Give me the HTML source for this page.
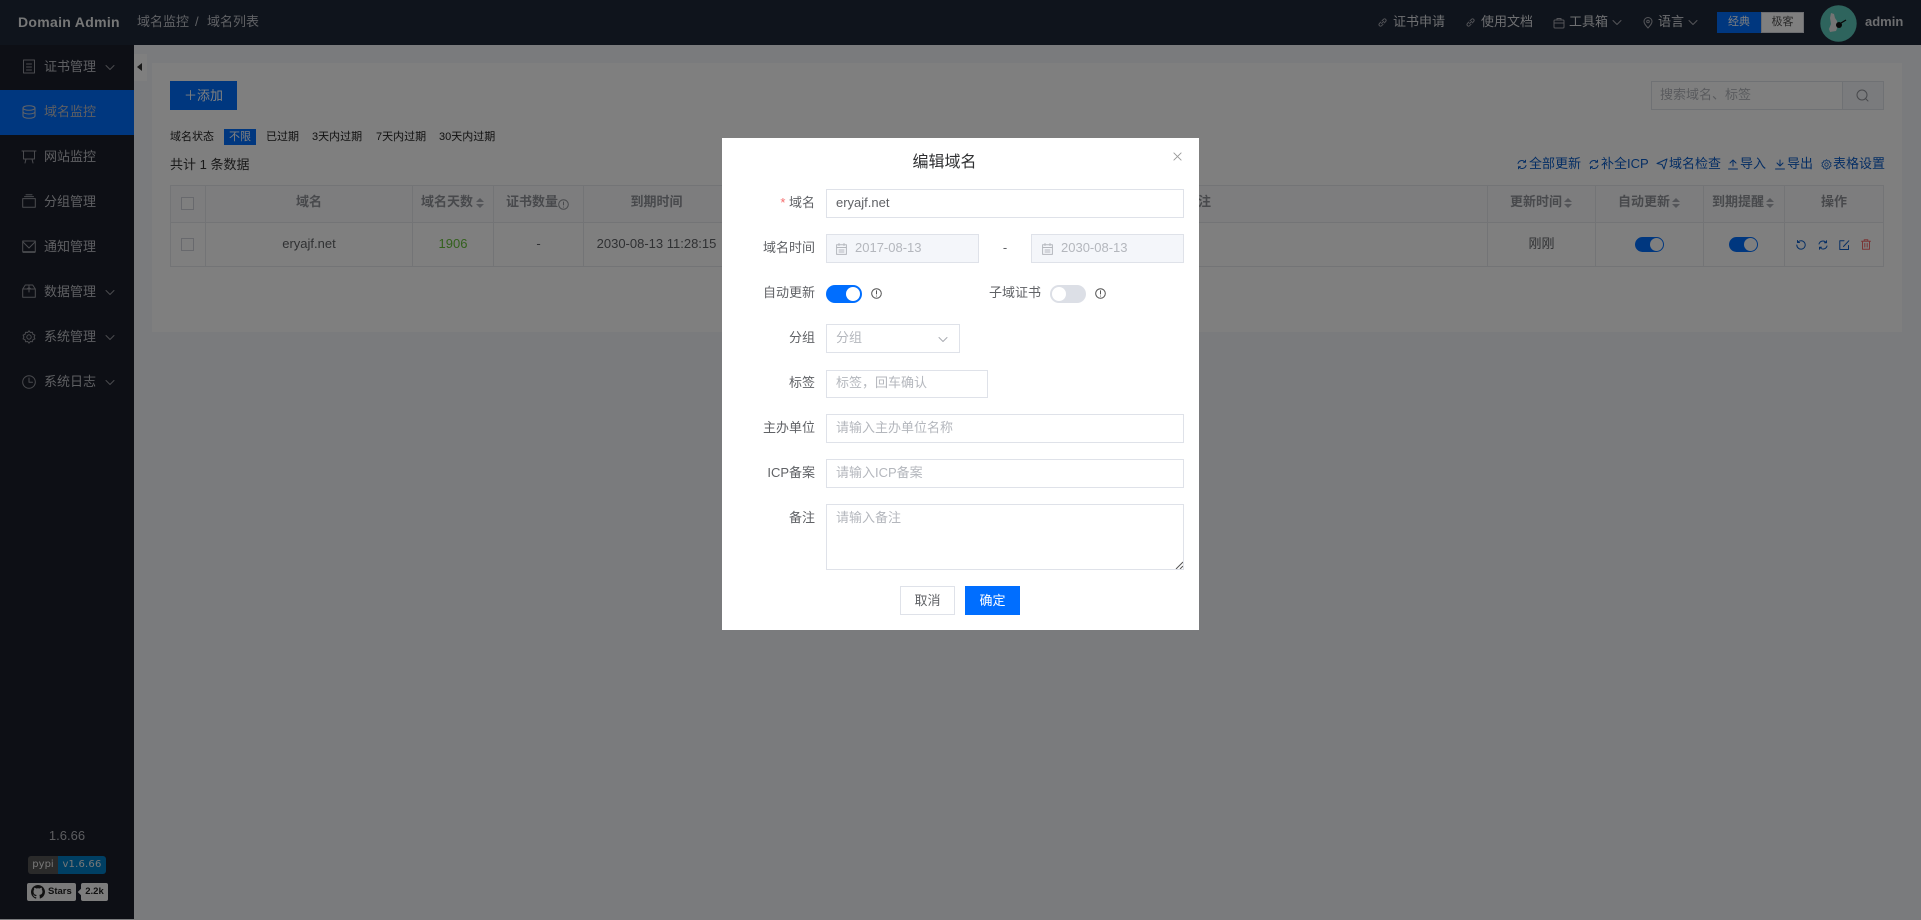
<!DOCTYPE html>
<html lang="zh"><head><meta charset="utf-8"><title>Domain Admin</title>
<style>
*{box-sizing:border-box}
html,body{margin:0;padding:0;width:1921px;height:920px;overflow:hidden;background:#f4f6fa;font-family:"Liberation Sans","Noto Sans CJK SC",sans-serif;font-size:13px;color:#606266}
.a{position:absolute}
.t{position:absolute;white-space:nowrap;line-height:20px;height:20px}
.c{text-align:center}
svg.i{position:absolute;fill:none;stroke:currentColor;stroke-width:1;stroke-linecap:round;stroke-linejoin:round}
.side{color:#bdbfc5}
.link{color:#0a5cc8}
.th{font-weight:bold;color:#909399;text-align:center}
.line{position:absolute;background:#e6e8ec}
.inp{position:absolute;border:1px solid #dfe2e9;background:#fff;height:29px}
.lab{position:absolute;white-space:nowrap;line-height:20px;height:20px;color:#606266;text-align:right;width:100px;left:715px}
.ph{color:#b4b7bd}
</style></head><body>

<!-- header -->
<div class="a" style="left:0;top:0;width:1921px;height:45px;background:#1f2838"></div>
<div class="t" style="left:18px;top:12px;color:#fff;font-weight:bold;font-size:14px;letter-spacing:.3px;opacity:.92">Domain Admin</div>
<div class="t" style="left:137px;top:12px;color:#bfc2c9">域名监控</div>
<div class="t" style="left:195px;top:12px;color:#bfc2c9">/</div>
<div class="t" style="left:207px;top:12px;color:#bfc2c9">域名列表</div>

<div style="color:#dcdee2">
<svg class="i" style="left:1377px;top:17px;color:#a8abb2" width="11" height="11" viewBox="0 0 12 12"><path d="M5 7.2 7.4 4.8M4.2 5.5 2.6 7.1a1.7 1.7 0 0 0 2.4 2.4L6.6 8M5.5 4.1 7.1 2.5a1.7 1.7 0 0 1 2.4 2.4L7.9 6.5"/></svg>
<div class="t" style="left:1393px;top:12px">证书申请</div>
<svg class="i" style="left:1465px;top:17px;color:#a8abb2" width="11" height="11" viewBox="0 0 12 12"><path d="M5 7.2 7.4 4.8M4.2 5.5 2.6 7.1a1.7 1.7 0 0 0 2.4 2.4L6.6 8M5.5 4.1 7.1 2.5a1.7 1.7 0 0 1 2.4 2.4L7.9 6.5"/></svg>
<div class="t" style="left:1481px;top:12px">使用文档</div>
<svg class="i" style="left:1553px;top:17px;color:#a8abb2" width="12" height="12" viewBox="0 0 12 12"><rect x="1" y="3" width="10" height="8" rx="1"/><path d="M4 3V1.5h4V3M1 6h10"/></svg>
<div class="t" style="left:1569px;top:12px">工具箱</div>
<svg class="i" style="left:1612px;top:19px;color:#a8abb2" width="10" height="7" viewBox="0 0 10 7"><path d="M1 1.5 5 5.5 9 1.5"/></svg>
<svg class="i" style="left:1643px;top:17px;color:#a8abb2" width="10" height="12" viewBox="0 0 10 12"><path d="M5 11C2.5 8.2 1 6.5 1 4.5a4 4 0 0 1 8 0C9 6.5 7.5 8.2 5 11Z"/><circle cx="5" cy="4.5" r="1.3"/></svg>
<div class="t" style="left:1658px;top:12px">语言</div>
<svg class="i" style="left:1688px;top:19px;color:#a8abb2" width="10" height="7" viewBox="0 0 10 7"><path d="M1 1.5 5 5.5 9 1.5"/></svg>
</div>
<div class="a c" style="left:1717px;top:12px;width:44px;height:21px;background:#006eff;color:#fff;line-height:21px;font-size:11px">经典</div>
<div class="a c" style="left:1761px;top:12px;width:43px;height:21px;background:#fff;border:1px solid #d8dae0;color:#555;line-height:19px;font-size:11px">极客</div>
<svg class="a" style="left:1820px;top:5px" width="37" height="37" viewBox="0 0 37 37"><circle cx="18.5" cy="18.5" r="18.2" fill="#5cc8ba"/><path d="M11 8l3 1 1 4 2 3 1 5-2 5-6 1-1-3 2-5-1-6Z" fill="#e8e8e8"/><circle cx="19" cy="20" r="3" fill="#111"/><path d="M21 18l5-3" stroke="#111" stroke-width="1.3"/></svg>
<div class="t" style="left:1865px;top:12px;font-weight:bold;color:#d8dade;font-size:13px">admin</div>

<!-- sidebar -->
<div class="a" style="left:0;top:45px;width:134px;height:874px;background:#1b1e2a"></div>
<div class="a" style="left:0;top:90px;width:134px;height:45px;background:#006eff"></div>
<div class="side">
<svg class="i" style="left:22px;top:59px;color:#94979e" width="14" height="15" viewBox="0 0 14 15"><rect x="1.5" y="1" width="11" height="13"/><path d="M4.5 5h5M4.5 8h5M4.5 11h5"/></svg>
<div class="t" style="left:44px;top:57px">证书管理</div>
<svg class="i" style="left:105px;top:64px;color:#94979e" width="10" height="7" viewBox="0 0 10 7"><path d="M1 1.5 5 5.5 9 1.5"/></svg>
<svg class="i" style="left:22px;top:105px;color:#c8cad0" width="14" height="14" viewBox="0 0 14 14"><ellipse cx="7" cy="3" rx="6" ry="2.3"/><path d="M1 3v8c0 1.3 2.7 2.3 6 2.3s6-1 6-2.3V3M1 6.7c0 1.3 2.7 2.3 6 2.3s6-1 6-2.3"/></svg>
<div class="t" style="left:44px;top:102px">域名监控</div>
<svg class="i" style="left:21px;top:149px;color:#94979e" width="16" height="15" viewBox="0 0 16 15"><path d="M1 2h14M2.5 2v8h11V2M5 10l-1 4M11 10l1 4"/></svg>
<div class="t" style="left:44px;top:147px">网站监控</div>
<svg class="i" style="left:22px;top:194px;color:#94979e" width="14" height="14" viewBox="0 0 14 14"><rect x=".7" y="4.6" width="12.6" height="8.7"/><path d="M2.5 2.6h9M4 .8h6"/></svg>
<div class="t" style="left:44px;top:192px">分组管理</div>
<svg class="i" style="left:22px;top:240px;color:#94979e" width="14" height="13" viewBox="0 0 14 13"><rect x=".7" y="1" width="12.6" height="10.6"/><path d="M1 2l6 6 6-6M1 12.6h12"/></svg>
<div class="t" style="left:44px;top:237px">通知管理</div>
<svg class="i" style="left:22px;top:284px;color:#94979e" width="14" height="14" viewBox="0 0 14 14"><path d="M.7 5v8.3h12.6V5L10.7 1H3.3ZM.7 5h12.6M7 1v7M5 5l2-1.5L9 5"/></svg>
<div class="t" style="left:44px;top:282px">数据管理</div>
<svg class="i" style="left:105px;top:289px;color:#94979e" width="10" height="7" viewBox="0 0 10 7"><path d="M1 1.5 5 5.5 9 1.5"/></svg>
<svg class="i" style="left:22px;top:330px;color:#94979e" width="14" height="14" viewBox="0 0 14 14"><path d="M7 .8l1.3 1.7 2.1-.3.5 2.1 2 .8-.8 1.9.8 1.9-2 .8-.5 2.1-2.1-.3L7 13.2l-1.3-1.7-2.1.3-.5-2.1-2-.8.8-1.9-.8-1.9 2-.8.5-2.1 2.1.3Z"/><circle cx="7" cy="7" r="2.2"/></svg>
<div class="t" style="left:44px;top:327px">系统管理</div>
<svg class="i" style="left:105px;top:334px;color:#94979e" width="10" height="7" viewBox="0 0 10 7"><path d="M1 1.5 5 5.5 9 1.5"/></svg>
<svg class="i" style="left:22px;top:375px;color:#94979e" width="14" height="14" viewBox="0 0 14 14"><circle cx="7" cy="7" r="6.3"/><path d="M7 3v4.2h3.5"/></svg>
<div class="t" style="left:44px;top:372px">系统日志</div>
<svg class="i" style="left:105px;top:379px;color:#94979e" width="10" height="7" viewBox="0 0 10 7"><path d="M1 1.5 5 5.5 9 1.5"/></svg>
<div class="t c" style="left:0;top:826px;width:134px;color:#b8bac0">1.6.66</div>
</div>
<div class="a" style="left:28px;top:856px;width:30px;height:18px;background:#555;border-radius:3px 0 0 3px;color:#eee;font:10px/18px 'DejaVu Sans',sans-serif;text-align:center">pypi</div>
<div class="a" style="left:58px;top:856px;width:48px;height:18px;background:#007ec6;border-radius:0 3px 3px 0;color:#eee;font:10px/18px 'DejaVu Sans',sans-serif;text-align:center;letter-spacing:.2px">v1.6.66</div>
<div class="a" style="left:27px;top:883px;width:49px;height:18px;background:#f4f4f4;border-radius:2px"></div>
<svg class="a" style="left:31px;top:885px" width="14" height="14" viewBox="0 0 16 16"><path fill="#222" d="M8 0C3.6 0 0 3.6 0 8c0 3.5 2.3 6.5 5.5 7.6.4.1.5-.2.5-.4v-1.4c-2.2.5-2.7-1.1-2.7-1.1-.4-.9-.9-1.2-.9-1.2-.7-.5.1-.5.1-.5.8.1 1.2.8 1.2.8.7 1.2 1.9.9 2.3.7.1-.5.3-.9.5-1.1-1.8-.2-3.6-.9-3.6-4 0-.9.3-1.6.8-2.1-.1-.2-.4-1 .1-2.1 0 0 .7-.2 2.2.8a7.6 7.6 0 0 1 4 0c1.5-1 2.2-.8 2.2-.8.4 1.1.2 1.9.1 2.1.5.6.8 1.3.8 2.1 0 3.1-1.9 3.7-3.7 3.9.3.3.6.8.6 1.5v2.2c0 .2.1.5.6.4A8 8 0 0 0 16 8c0-4.4-3.6-8-8-8Z"/></svg>
<div class="a" style="left:48px;top:883px;height:18px;color:#222;font:bold 9.5px/18px 'Liberation Sans',sans-serif">Stars</div>
<div class="a" style="left:81px;top:883px;width:27px;height:18px;background:#fbfbfb;border-radius:2px;color:#222;font:bold 9.5px/18px 'Liberation Sans',sans-serif;text-align:center">2.2k</div>
<div class="a" style="left:78.5px;top:889px;width:6px;height:6px;background:#fbfbfb;transform:rotate(45deg)"></div>

<!-- collapse tab -->
<div class="a" style="left:134px;top:54px;width:13px;height:27px;background:#fff"></div>
<div class="a" style="left:137px;top:63px;width:0;height:0;border:4px solid transparent;border-right:5px solid #333;border-left:0"></div>

<!-- card -->
<div class="a" style="left:152px;top:63px;width:1750px;height:269px;background:#fff"></div>
<div class="a c" style="left:170px;top:81px;width:67px;height:29px;background:#006eff;color:#fff;line-height:29px">＋添加</div>

<div class="a" style="left:1651px;top:81px;width:233px;height:29px;border:1px solid #dfe2e9"></div>
<div class="a" style="left:1842px;top:81px;width:42px;height:29px;border:1px solid #dfe2e9;background:#f4f6fa"></div>
<div class="t ph" style="left:1660px;top:85px">搜索域名、标签</div>
<svg class="i" style="left:1856px;top:89px;color:#909399" width="13" height="13" viewBox="0 0 13 13"><circle cx="6" cy="6" r="5"/><path d="M9.7 9.7 12 12"/></svg>

<div class="t" style="left:170px;top:127px;font-size:11px;color:#222">域名状态</div>
<div class="a c" style="left:224px;top:129px;width:32px;height:16px;background:#006eff;color:#fff;font-size:11px;line-height:16px">不限</div>
<div class="t" style="left:266px;top:127px;font-size:11px;color:#222">已过期</div>
<div class="t" style="left:312px;top:127px;font-size:11px;color:#222">3天内过期</div>
<div class="t" style="left:376px;top:127px;font-size:11px;color:#222">7天内过期</div>
<div class="t" style="left:439px;top:127px;font-size:11px;color:#222">30天内过期</div>
<div class="t" style="left:170px;top:155px;color:#333">共计 1 条数据</div>

<div class="link">
<svg class="i" style="left:1517px;top:159px" width="10" height="11" viewBox="0 0 10 10"><path d="M1 4a4 4 0 0 1 7-1.5M9 6a4 4 0 0 1-7 1.5M8.5 .8v2H6.5M1.5 9.2v-2h2"/></svg>
<div class="t" style="left:1529px;top:154px">全部更新</div>
<svg class="i" style="left:1589px;top:159px" width="10" height="11" viewBox="0 0 10 10"><path d="M1 4a4 4 0 0 1 7-1.5M9 6a4 4 0 0 1-7 1.5M8.5 .8v2H6.5M1.5 9.2v-2h2"/></svg>
<div class="t" style="left:1601px;top:154px">补全ICP</div>
<svg class="i" style="left:1656px;top:158px" width="12" height="12" viewBox="0 0 12 12"><path d="M1 5.5 11 1 8 11 6 6.5Z"/></svg>
<div class="t" style="left:1669px;top:154px">域名检查</div>
<svg class="i" style="left:1728px;top:159px" width="10" height="11" viewBox="0 0 10 11"><path d="M5 7V1M2 4l3-3 3 3M.5 10h9"/></svg>
<div class="t" style="left:1740px;top:154px">导入</div>
<svg class="i" style="left:1775px;top:159px" width="10" height="11" viewBox="0 0 10 11"><path d="M5 1v6M2 4l3 3 3-3M.5 10h9"/></svg>
<div class="t" style="left:1787px;top:154px">导出</div>
<svg class="i" style="left:1821px;top:159px" width="11" height="11" viewBox="0 0 14 14"><path d="M7 .8l1.3 1.7 2.1-.3.5 2.1 2 .8-.8 1.9.8 1.9-2 .8-.5 2.1-2.1-.3L7 13.2l-1.3-1.7-2.1.3-.5-2.1-2-.8.8-1.9-.8-1.9 2-.8.5-2.1 2.1.3Z"/><circle cx="7" cy="7" r="2.2"/></svg>
<div class="t" style="left:1833px;top:154px">表格设置</div>
</div>

<!-- table -->
<div class="a" style="left:170px;top:185px;width:1714px;height:37px;background:#fafbfc"></div>
<div class="line" style="left:170px;top:185px;width:1714px;height:1px"></div>
<div class="line" style="left:170px;top:222px;width:1714px;height:1px"></div>
<div class="line" style="left:170px;top:266px;width:1714px;height:1px"></div>
<div class="line" style="left:170px;top:185px;width:1px;height:82px"></div>
<div class="line" style="left:205px;top:185px;width:1px;height:82px"></div>
<div class="line" style="left:412px;top:185px;width:1px;height:82px"></div>
<div class="line" style="left:493px;top:185px;width:1px;height:82px"></div>
<div class="line" style="left:583px;top:185px;width:1px;height:82px"></div>
<div class="line" style="left:1487px;top:185px;width:1px;height:82px"></div>
<div class="line" style="left:1595px;top:185px;width:1px;height:82px"></div>
<div class="line" style="left:1703px;top:185px;width:1px;height:82px"></div>
<div class="line" style="left:1784px;top:185px;width:1px;height:82px"></div>
<div class="line" style="left:1883px;top:185px;width:1px;height:82px"></div>
<div class="a" style="left:181px;top:197px;width:13px;height:13px;border:1px solid #d0d3da;background:#fff"></div>
<div class="a" style="left:181px;top:238px;width:13px;height:13px;border:1px solid #d0d3da;background:#fff"></div>

<div class="t th" style="left:206px;top:192px;width:206px">域名</div>
<div class="t th" style="left:421px;top:192px">域名天数</div>
<div class="a" style="left:476px;top:198px;width:0;height:0;border:4px solid transparent;border-bottom:4px solid #a8abb2;border-top:0"></div>
<div class="a" style="left:476px;top:204px;width:0;height:0;border:4px solid transparent;border-top:4px solid #a8abb2;border-bottom:0"></div>
<div class="t th" style="left:506px;top:192px">证书数量</div>
<svg class="i" style="left:558px;top:199px;color:#909399" width="11" height="11" viewBox="0 0 11 11"><circle cx="5.5" cy="5.5" r="4.8"/><path d="M5.5 3v3M5.5 8v.1"/></svg>
<div class="t th" style="left:584px;top:192px;width:145px">到期时间</div>
<div class="t th" style="left:1184px;top:192px;width:27px;text-align:right">注</div>

<div class="t" style="left:1510px;top:192px;font-weight:bold;color:#909399">更新时间</div>
<div class="a" style="left:1564px;top:198px;border:4px solid transparent;border-bottom:4px solid #a8abb2;border-top:0"></div>
<div class="a" style="left:1564px;top:204px;border:4px solid transparent;border-top:4px solid #a8abb2;border-bottom:0"></div>
<div class="t" style="left:1618px;top:192px;font-weight:bold;color:#909399">自动更新</div>
<div class="a" style="left:1672px;top:198px;border:4px solid transparent;border-bottom:4px solid #a8abb2;border-top:0"></div>
<div class="a" style="left:1672px;top:204px;border:4px solid transparent;border-top:4px solid #a8abb2;border-bottom:0"></div>
<div class="t" style="left:1712px;top:192px;font-weight:bold;color:#909399">到期提醒</div>
<div class="a" style="left:1766px;top:198px;border:4px solid transparent;border-bottom:4px solid #a8abb2;border-top:0"></div>
<div class="a" style="left:1766px;top:204px;border:4px solid transparent;border-top:4px solid #a8abb2;border-bottom:0"></div>
<div class="t th" style="left:1785px;top:192px;width:98px">操作</div>

<div class="t c" style="left:206px;top:234px;width:206px">eryajf.net</div>
<div class="t c" style="left:413px;top:234px;width:80px;color:#67c23a">1906</div>
<div class="t c" style="left:494px;top:234px;width:89px">-</div>
<div class="t c" style="left:584px;top:234px;width:145px">2030-08-13 11:28:15</div>
<div class="t c" style="left:1488px;top:234px;width:107px">刚刚</div>

<div class="a" style="left:1635px;top:237px;width:29px;height:15px;border-radius:8px;background:#006eff"></div>
<div class="a" style="left:1650px;top:238px;width:13px;height:13px;border-radius:50%;background:#fff"></div>
<div class="a" style="left:1729px;top:237px;width:29px;height:15px;border-radius:8px;background:#006eff"></div>
<div class="a" style="left:1744px;top:238px;width:13px;height:13px;border-radius:50%;background:#fff"></div>

<div class="link">
<svg class="i" style="left:1796px;top:240px" width="10" height="10" viewBox="0 0 10 10"><path d="M2 2a4.2 4.2 0 1 1-1.2 3M1.5 .5V2.5h2"/></svg>
<svg class="i" style="left:1818px;top:240px" width="10" height="10" viewBox="0 0 10 10"><path d="M1 4a4 4 0 0 1 7-1.5M9 6a4 4 0 0 1-7 1.5M8.5 .8v2H6.5M1.5 9.2v-2h2"/></svg>
<svg class="i" style="left:1839px;top:240px" width="11" height="10" viewBox="0 0 11 10"><path d="M9.5 5.5V9.5H.8V.8H5M4.5 6.5 9.8.8"/></svg>
</div>
<svg class="i" style="left:1861px;top:239px;color:#f56c6c" width="10" height="11" viewBox="0 0 10 11"><path d="M.5 2.2h9M3.2 2.2V.8h3.6v1.4M1.5 2.2v8h7v-8M3.8 4.5v3.5M6.2 4.5v3.5"/></svg>

<!-- overlay -->
<div class="a" style="left:0;top:0;width:1921px;height:920px;background:rgba(0,0,0,.5)"></div>

<!-- modal -->
<div class="a" style="left:722px;top:138px;width:477px;height:492px;background:#fff"></div>
<div class="t c" style="left:722px;top:153px;width:445px;font-size:16px;color:#303133">编辑域名</div>
<svg class="i" style="left:1172.5px;top:151.5px;color:#999" width="9" height="9" viewBox="0 0 10 10"><path d="M1 1l8 8M9 1 1 9"/></svg>

<div class="lab" style="top:193px"><span style="color:#f56c6c">*</span> 域名</div>
<div class="inp" style="left:826px;top:189px;width:358px"></div>
<div class="t" style="left:836px;top:193px">eryajf.net</div>

<div class="lab" style="top:238px">域名时间</div>
<div class="inp" style="left:826px;top:234px;width:153px;background:#f4f6fa"></div>
<div class="inp" style="left:1031px;top:234px;width:153px;background:#f4f6fa"></div>
<svg class="i" style="left:836px;top:243px;color:#b4b7bd" width="11" height="12" viewBox="0 0 11 12"><rect x=".6" y="1.8" width="9.8" height="9.6"/><path d="M.6 4.5h9.8M3 .5v2M8 .5v2M3 7h5M3 9h5"/></svg>
<div class="t ph" style="left:855px;top:238px">2017-08-13</div>
<div class="t c" style="left:995px;top:238px;width:20px">-</div>
<svg class="i" style="left:1042px;top:243px;color:#b4b7bd" width="11" height="12" viewBox="0 0 11 12"><rect x=".6" y="1.8" width="9.8" height="9.6"/><path d="M.6 4.5h9.8M3 .5v2M8 .5v2M3 7h5M3 9h5"/></svg>
<div class="t ph" style="left:1061px;top:238px">2030-08-13</div>

<div class="lab" style="top:283px">自动更新</div>
<div class="a" style="left:826px;top:285px;width:36px;height:18px;border-radius:9px;background:#006eff"></div>
<div class="a" style="left:846px;top:287px;width:14px;height:14px;border-radius:50%;background:#fff"></div>
<svg class="i" style="left:871px;top:288px;color:#555" width="11" height="11" viewBox="0 0 11 11"><circle cx="5.5" cy="5.5" r="4.8"/><path d="M5.5 2.8v3.2M5.5 8v.1"/></svg>
<div class="t" style="left:989px;top:283px">子域证书</div>
<div class="a" style="left:1050px;top:285px;width:36px;height:18px;border-radius:9px;background:#dcdfe6"></div>
<div class="a" style="left:1052px;top:287px;width:14px;height:14px;border-radius:50%;background:#fff"></div>
<svg class="i" style="left:1095px;top:288px;color:#555" width="11" height="11" viewBox="0 0 11 11"><circle cx="5.5" cy="5.5" r="4.8"/><path d="M5.5 2.8v3.2M5.5 8v.1"/></svg>

<div class="lab" style="top:328px">分组</div>
<div class="inp" style="left:826px;top:324px;width:134px"></div>
<div class="t ph" style="left:836px;top:328px">分组</div>
<svg class="i" style="left:938px;top:336px;color:#a8abb2" width="10" height="7" viewBox="0 0 10 7"><path d="M1 1.5 5 5.5 9 1.5"/></svg>

<div class="lab" style="top:373px">标签</div>
<div class="inp" style="left:826px;top:370px;width:162px;height:28px"></div>
<div class="t ph" style="left:836px;top:373px">标签，回车确认</div>

<div class="lab" style="top:418px">主办单位</div>
<div class="inp" style="left:826px;top:414px;width:358px"></div>
<div class="t ph" style="left:836px;top:418px">请输入主办单位名称</div>

<div class="lab" style="top:463px">ICP备案</div>
<div class="inp" style="left:826px;top:459px;width:358px"></div>
<div class="t ph" style="left:836px;top:463px">请输入ICP备案</div>

<div class="lab" style="top:508px">备注</div>
<div class="inp" style="left:826px;top:504px;width:358px;height:66px"></div>
<div class="t ph" style="left:836px;top:508px">请输入备注</div>
<svg class="a" style="left:1175px;top:561px" width="8" height="8" viewBox="0 0 8 8"><path d="M1 8 8 1M5 8 8 5" stroke="#555" fill="none"/></svg>

<div class="a c" style="left:900px;top:586px;width:55px;height:29px;border:1px solid #dfe2e9;line-height:27px;color:#606266">取消</div>
<div class="a c" style="left:965px;top:586px;width:55px;height:29px;background:#006eff;line-height:29px;color:#fff">确定</div>

</body></html>
